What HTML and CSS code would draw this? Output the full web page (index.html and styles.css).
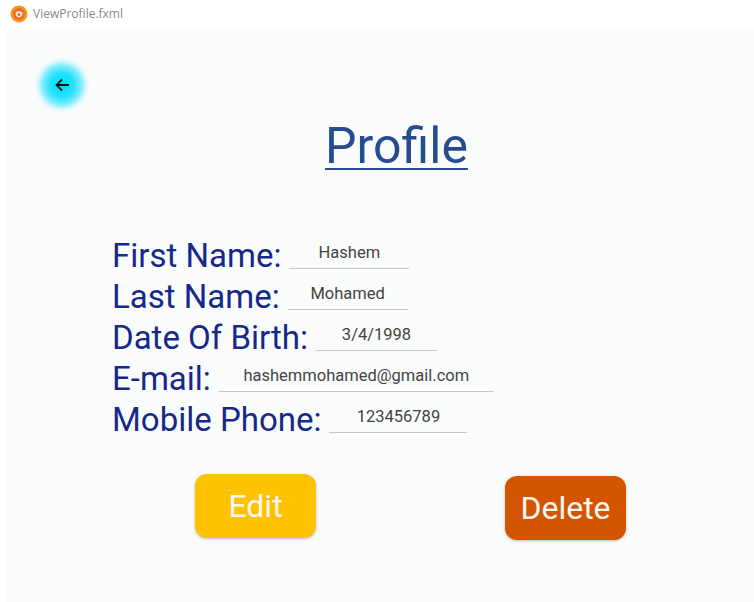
FILE: index.html
```html
<!DOCTYPE html>
<html>
<head>
<meta charset="utf-8">
<title>ViewProfile.fxml</title>
<link rel="stylesheet" href="styles.css">
</head>
<body>
<div class="titlebar">
  <svg class="app-icon" width="18" height="18" viewBox="0 0 18 18">
    <circle cx="9" cy="9" r="8.5" fill="#f39a1e"/>
    <circle cx="9" cy="9" r="6" fill="#f46b1f"/>
    <path d="M5.5 7.5 Q9 5 12.5 7.5 Q12.5 12 9 12.5 Q5.5 12 5.5 7.5Z" fill="#fff" opacity="0.9"/>
    <circle cx="9" cy="9.5" r="1.5" fill="#f46b1f"/>
  </svg>
  <span class="title-text">ViewProfile.fxml</span>
</div>
<main class="scene">
  <div class="top">
    <button class="back" aria-label="Back">
      <svg width="16" height="16" viewBox="0 0 16 16">
        <path d="M15 8H2.5M8 2.5 2.5 8 8 13.5" fill="none" stroke="#111" stroke-width="1.8"/>
      </svg>
    </button>
  </div>
  <h1 class="heading">Profile</h1>
  <section class="form">
    <div class="row"><span class="label">First Name:</span><span class="field w120">Hashem</span></div>
    <div class="row"><span class="label">Last Name:</span><span class="field w120">Mohamed</span></div>
    <div class="row"><span class="label">Date Of Birth:</span><span class="field w121">3/4/1998</span></div>
    <div class="row"><span class="label">E-mail:</span><span class="field w275">hashemmohamed@gmail.com</span></div>
    <div class="row"><span class="label">Mobile Phone:</span><span class="field w138">123456789</span></div>
  </section>
  <div class="actions">
    <button class="btn edit">Edit</button>
    <button class="btn delete">Delete</button>
  </div>
</main>
</body>
</html>
```
FILE: styles.css
```css
html, body {
  margin: 0;
  padding: 0;
  background: #ffffff;
  font-family: Roboto, "Noto Sans", sans-serif;
}

.titlebar {
  height: 27px;
  display: flex;
  align-items: flex-start;
  padding-left: 10px;
  box-sizing: border-box;
  padding-top: 5px;
}

.app-icon {
  flex: none;
}

.title-text {
  font-family: "Open Sans", "Noto Sans", sans-serif;
  font-size: 12px;
  color: #8a8a8a;
  margin-left: 5px;
  line-height: 18px;
}

.scene {
  margin-left: 7px;
  height: 575px;
  background: #fafcfc;
}

.top {
  height: 30px;
  padding-left: 28px;
  padding-top: 31px;
}

.back {
  width: 56px;
  height: 56px;
  margin-left: -1px;
  margin-top: -1px;
  border: none;
  border-radius: 50%;
  padding: 0;
  display: flex;
  align-items: center;
  justify-content: center;
  background: radial-gradient(circle closest-side, #00dcff 0%, #1ee2ff 40%, rgba(80, 230, 255, 0.75) 68%, rgba(170, 243, 255, 0.35) 88%, rgba(250, 252, 252, 0) 100%);
}

.heading {
  margin: 30px 0 0 318px;
  font-size: 50px;
  font-weight: 400;
  line-height: 56px;
  color: #254c8e;
  text-decoration: underline;
  text-decoration-thickness: 2px;
  text-underline-offset: 5px;
}

.form {
  margin-top: 61px;
  padding-left: 105px;
  display: flex;
  flex-direction: column;
}

.row {
  display: flex;
  align-items: flex-start;
  height: 41px;
}

.label {
  font-size: 33px;
  line-height: 41px;
  color: #16298a;
  white-space: nowrap;
}

.field {
  margin-left: 8px;
  margin-top: 8px;
  height: 26px;
  border-bottom: 1px solid #c6c6c6;
  font-size: 16.5px;
  color: #444;
  text-align: center;
  line-height: 20px;
  box-sizing: border-box;
  padding-bottom: 7px;
}

.w120 { width: 120px; }
.w121 { width: 121px; }
.w275 { width: 275px; }
.w138 { width: 138px; }

.actions {
  display: flex;
  align-items: flex-start;
  margin-top: 34px;
  padding-left: 188px;
}

.btn {
  width: 121px;
  height: 64px;
  border: none;
  border-radius: 12px;
  color: #fbf5f3;
  font-family: Roboto, "Noto Sans", sans-serif;
  font-size: 32px;
  box-shadow: 0 1px 3px rgba(0, 0, 0, 0.25);
}

.edit {
  background: #fec200;
}

.delete {
  background: #d45500;
  margin-left: 189px;
  margin-top: 2px;
}
```
